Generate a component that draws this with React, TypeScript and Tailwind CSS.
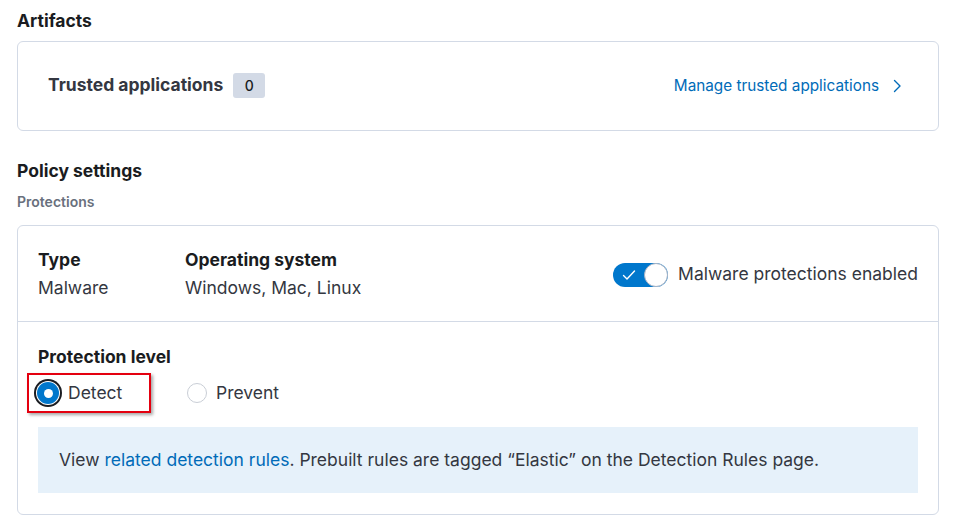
import { ReactNode } from "react";

function Card({ children, className = "" }: { children: ReactNode; className?: string }) {
  return (
    <div className={`rounded-[6px] border border-[#d3dae6] bg-white ${className}`}>{children}</div>
  );
}

function Toggle({ on }: { on: boolean }) {
  return (
    <span
      className={`relative flex h-[24px] w-[55px] shrink-0 items-center rounded-full ${
        on ? "bg-[#0077cc]" : "bg-[#98a2b3]"
      }`}
    >
      <svg viewBox="0 0 16 16" className="ml-[8px] h-[16px] w-[16px]" fill="none">
        <path d="M2.5 8.5l3.5 3.5 7.5-8" stroke="white" strokeWidth="1.4" strokeLinecap="round" strokeLinejoin="round" />
      </svg>
      <span className="absolute right-0 top-0 h-[24px] w-[24px] rounded-full border border-[#a8b3c4] bg-white" />
    </span>
  );
}

function Radio({ checked, label }: { checked: boolean; label: string }) {
  return (
    <label className="flex items-center gap-[9px]">
      {checked ? (
        <span className="flex h-[22px] w-[22px] items-center justify-center rounded-full bg-[#0077cc] ring-[2px] ring-[#1a1c21] ring-offset-[1px]">
          <span className="h-[9px] w-[9px] rounded-full bg-white" />
        </span>
      ) : (
        <span className="h-[20px] w-[20px] rounded-full border border-[#c9ced6] bg-white" />
      )}
      <span className="text-[17.5px] text-[#343741]">{label}</span>
    </label>
  );
}

export default function App() {
  return (
    <div
      className="min-h-[524px] bg-white pl-[17px] pr-[15px] pt-[8px] text-[#343741]"
      style={{ fontFamily: "Inter, 'Noto Sans', sans-serif" }}
    >
      <h2 className="text-[17.5px] font-bold leading-[25px] text-[#1a1c21]">Artifacts</h2>
      <Card className="mt-[8px] flex h-[90px] items-center justify-between pl-[30px] pr-[33px]">
        <div className="flex items-center gap-[10px] pb-[2px]">
          <span className="text-[17.5px] font-bold text-[#343741]">Trusted applications</span>
          <span className="flex h-[25px] w-[32px] items-center justify-center rounded-[3px] bg-[#d3dae6] text-[14px] font-medium text-[#1a1c21]">
            0
          </span>
        </div>
        <a className="flex items-center gap-[10px] text-[15.3px] text-[#006bb8]">
          Manage trusted applications
          <svg viewBox="0 0 16 16" className="h-[16px] w-[16px]" fill="none">
            <path d="M5.5 2.5l5.5 5.5-5.5 5.5" stroke="#006bb8" strokeWidth="1.4" strokeLinecap="round" strokeLinejoin="round" />
          </svg>
        </a>
      </Card>

      <h2 className="mt-[28px] text-[17.5px] font-bold leading-[24px] text-[#1a1c21]">Policy settings</h2>
      <h3 className="mt-[9px] text-[14px] font-semibold leading-[20px] text-[#69707d]">Protections</h3>
      <Card className="mt-[13px]">
        <div className="flex h-[96px] items-center justify-between border-b border-[#d3dae6] pl-[20px] pr-[20px]">
          <div className="flex gap-[39px]">
            <div className="w-[108px]">
              <div className="text-[17.5px] font-bold leading-[28px] text-[#1a1c21]">Type</div>
              <div className="text-[17.5px] leading-[28px]">Malware</div>
            </div>
            <div>
              <div className="text-[17.5px] font-bold leading-[28px] text-[#1a1c21]">Operating system</div>
              <div className="text-[17.5px] leading-[28px]">Windows, Mac, Linux</div>
            </div>
          </div>
          <div className="flex items-center gap-[10px] pt-[2px]">
            <Toggle on />
            <span className="text-[17.5px]">Malware protections enabled</span>
          </div>
        </div>
        <div className="px-[20px] pb-[21px] pt-[23px]">
          <div className="text-[17.5px] font-bold leading-[24px] text-[#1a1c21]">Protection level</div>
          <div className="mt-[4px] flex items-center">
            <div className="-ml-[11px] flex h-[40px] w-[124px] items-center border-2 border-[#e4000f] pl-[8px] shadow-[2px_2px_3px_rgba(0,0,0,0.35)]">
              <Radio checked label="Detect" />
            </div>
            <div className="ml-[36px]">
              <Radio checked={false} label="Prevent" />
            </div>
          </div>
          <div className="mt-[14px] flex h-[66px] items-center bg-[#e6f1fa] px-[21px] text-[17.5px]">
            <span>
              View <a className="text-[#006bb8]">related detection rules</a>. Prebuilt rules are tagged “Elastic” on
              the Detection Rules page.
            </span>
          </div>
        </div>
      </Card>
    </div>
  );
}
